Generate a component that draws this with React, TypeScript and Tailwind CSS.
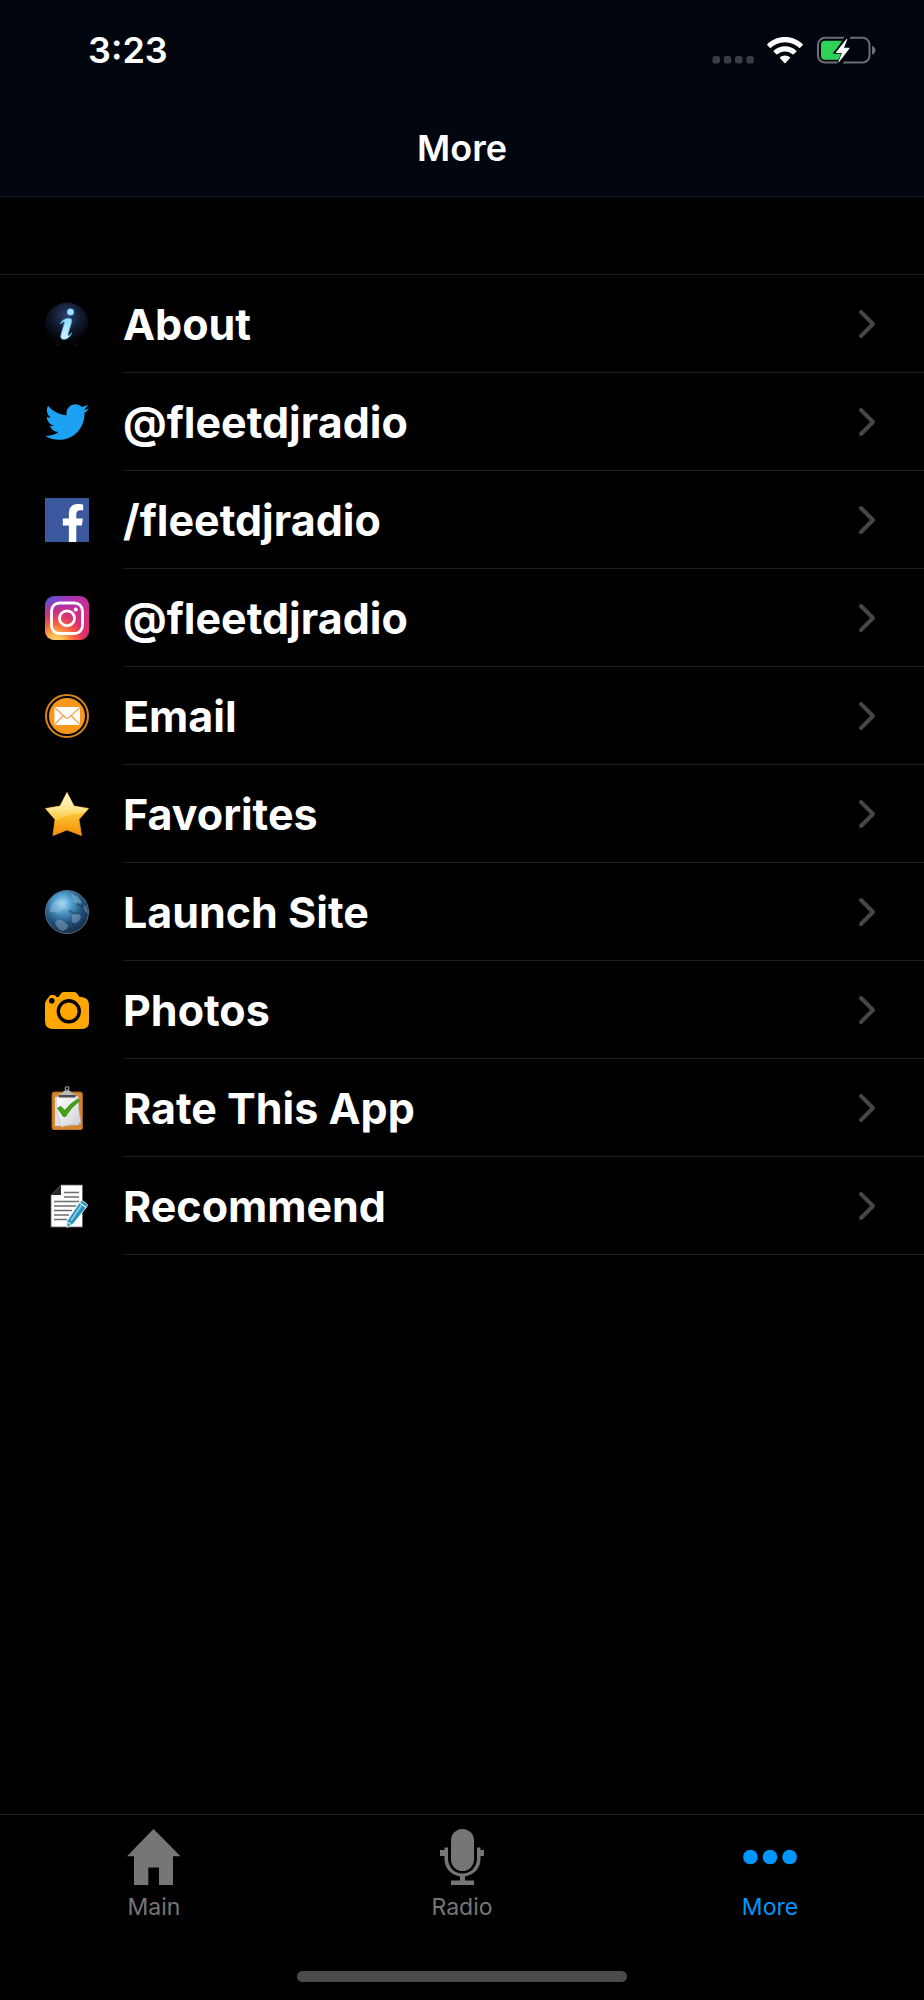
import type { ReactNode } from "react"
import { FaFacebookF, FaTwitter } from "react-icons/fa"

interface MenuItem {
  label: string
  href: string
  icon: ReactNode
}

function InfoIcon() {
  return (
    <svg viewBox="0 0 44 44" className="size-11" aria-hidden="true">
      <defs>
        <radialGradient id="info-bg" cx="0.5" cy="0.3" r="0.6">
          <stop offset="0" stopColor="#2c4069" />
          <stop offset="0.55" stopColor="#121b30" />
          <stop offset="1" stopColor="#030408" />
        </radialGradient>
        <linearGradient id="info-i" x1="0" y1="0" x2="0" y2="1">
          <stop offset="0" stopColor="#8fdcff" />
          <stop offset="1" stopColor="#d2f5ff" />
        </linearGradient>
      </defs>
      <circle cx="22" cy="22" r="21.5" fill="url(#info-bg)" />
      <path d="M11 42a21.5 21.5 0 0 0 22 0" fill="none" stroke="#1d1d1f" strokeWidth="0.8" />
      <circle cx="25.5" cy="10" r="3.6" fill="#9fe2ff" stroke="#2f6fae" strokeWidth="0.6" />
      <path
        d="M15 22c2-4 5.500-6 9-5.800 2.400.1 3.200 1.600 2.700 3.800l-3.700 12.500c-.3 1.400.6 1.400 1.600.5l2.200-2.400c-.9 3.600-4.300 6.900-8 6.800-2.800-.1-3.600-2-2.900-4.600l3.400-11.800c.3-1.300-.5-1.500-1.400-.7z"
        fill="url(#info-i)"
        stroke="#4a9ad0"
        strokeWidth="0.8"
      />
    </svg>
  )
}

function FacebookIcon() {
  return (
    <span className="flex size-11 items-end justify-end bg-[#3b579d] pr-1 text-white">
      <FaFacebookF className="h-[38px] w-6" aria-hidden="true" />
    </span>
  )
}

function InstagramIcon() {
  return (
    <svg viewBox="0 0 44 44" className="size-11" aria-hidden="true">
      <defs>
        <linearGradient id="ig-base" x1="0" y1="0" x2="1" y2="0.6">
          <stop offset="0" stopColor="#4a5bd8" />
          <stop offset="0.4" stopColor="#a433b8" />
          <stop offset="1" stopColor="#dd2a7b" />
        </linearGradient>
        <radialGradient id="ig-warm" cx="0.25" cy="1.05" r="0.95">
          <stop offset="0" stopColor="#fedc78" />
          <stop offset="0.2" stopColor="#fdb750" />
          <stop offset="0.45" stopColor="#f8603c" />
          <stop offset="0.7" stopColor="#e02f6a" stopOpacity="0.8" />
          <stop offset="1" stopColor="#d62976" stopOpacity="0" />
        </radialGradient>
      </defs>
      <rect width="44" height="44" rx="9" fill="url(#ig-base)" />
      <rect width="44" height="44" rx="9" fill="url(#ig-warm)" />
      <g fill="none" stroke="#fff" strokeWidth="2.800">
        <rect x="6.500" y="7" width="31" height="30.500" rx="8" />
        <circle cx="22" cy="22.300" r="7.500" />
      </g>
      <circle cx="30.800" cy="13.500" r="2" fill="#fff" />
    </svg>
  )
}

function EmailIcon() {
  return (
    <svg viewBox="0 0 44 44" className="size-11" aria-hidden="true">
      <circle cx="22" cy="22" r="21" fill="none" stroke="#d9841d" strokeWidth="2" />
      <circle cx="22" cy="22" r="18" fill="#f7981d" />
      <rect x="9.500" y="13" width="25.500" height="18" fill="#fff" />
      <path
        d="M9.500 13.500 20.500 23.500q1.700 1.500 3.500 0L35 13.500M9.500 30.500l9-9M35 30.500l-9-9"
        fill="none"
        stroke="#f2a44a"
        strokeWidth="1.200"
      />
    </svg>
  )
}

function StarIcon() {
  return (
    <svg viewBox="0 0 44 44" className="size-11" aria-hidden="true">
      <defs>
        <linearGradient id="star-bg" x1="0" y1="0" x2="0" y2="1">
          <stop offset="0" stopColor="#fdeaa0" />
          <stop offset="0.5" stopColor="#fbc531" />
          <stop offset="1" stopColor="#fb8c0b" />
        </linearGradient>
        <linearGradient id="star-gloss" x1="0" y1="0" x2="0" y2="1">
          <stop offset="0" stopColor="#fff3c0" />
          <stop offset="0.5" stopColor="#fff0b0" stopOpacity="0.8" />
          <stop offset="1" stopColor="#ffd75e" stopOpacity="0.4" />
        </linearGradient>
        <clipPath id="star-shape">
          <path d="M22 .5 29 14 43.500 16.500 34 27.500 36.500 43.500 22 38 8 43.500 10 27.500.5 16.500 15 14z" />
        </clipPath>
      </defs>
      <path
        d="M22 .5 29 14 43.500 16.500 34 27.500 36.500 43.500 22 38 8 43.500 10 27.500.5 16.500 15 14z"
        fill="url(#star-bg)"
        stroke="#e79a1c"
        strokeLinejoin="round"
        strokeWidth="0.8"
      />
      <path
        d="M0 0h44v20C30 21 20 24 10 29L0 20z"
        fill="url(#star-gloss)"
        clipPath="url(#star-shape)"
      />
    </svg>
  )
}

function GlobeIcon() {
  return (
    <svg viewBox="0 0 44 44" className="size-11" aria-hidden="true">
      <defs>
        <radialGradient id="globe-sea" cx="0.4" cy="0.3" r="0.72">
          <stop offset="0" stopColor="#a5dcf8" />
          <stop offset="0.3" stopColor="#4f9bcb" />
          <stop offset="0.65" stopColor="#235078" />
          <stop offset="1" stopColor="#162c48" />
        </radialGradient>
        <clipPath id="globe-clip">
          <circle cx="22" cy="22" r="21" />
        </clipPath>
      </defs>
      <circle cx="22" cy="22" r="21.500" fill="url(#globe-sea)" stroke="#53718c" />
      <g fill="#a9cbe0" fillOpacity="0.38" clipPath="url(#globe-clip)">
        <path d="M5 22c0-6 3-10 7-12q3-1 5 0l-1 4q4-1 5 1l1 3-5 1-3 4-5-1z" />
        <path d="M11 31q4-2 7 0l5 4-1 4-4 2q-5-1-8-8z" />
        <path d="M27 27q1-4 4-4l4 2 1 3-3 4q-4 2-6 0z" />
        <path d="m26 4 7 3 4 6-5 1-4-2 0-4z" />
        <path d="m38 14 4 4 1 6-3-3z" />
      </g>
      <path d="M32 13c2 3 5 4 7 2M24 21c4 1 5 4 9 2" fill="none" stroke="#15304e" strokeWidth="2" strokeOpacity="0.5" />
    </svg>
  )
}

function CameraIcon() {
  return (
    <svg viewBox="0 -2 44 44" className="size-11" aria-hidden="true">
      <path
        d="M3.500 7.500Q4.500 5 6 5h3q1.500 0 2.500 2h2L16 3.500Q16.800 2 18.500 2h11q1.700 0 2.500 1.500L34.500 7H37q7 1 7 8v17q0 7-7 7H8q-8 0-8-8V14q0-3 3.500-6.500z"
        fill="#ffa600"
      />
      <circle cx="6.800" cy="10.800" r="2.800" fill="#000" />
      <circle cx="23.800" cy="21.300" r="10.500" fill="none" stroke="#000" strokeWidth="3.400" />
    </svg>
  )
}

function ClipboardIcon() {
  return (
    <svg viewBox="0 0 44 44" className="size-11" aria-hidden="true">
      <defs>
        <linearGradient id="paper" x1="0" y1="0" x2="1" y2="1">
          <stop offset="0" stopColor="#fff" />
          <stop offset="1" stopColor="#cfcfd6" />
        </linearGradient>
      </defs>
      <rect x="7" y="6" width="30.500" height="38" rx="2.500" fill="#d18432" stroke="#a96420" strokeWidth="0.8" />
      <path d="m10 11 23-1 1 29-24 1z" fill="#e1e1e5" />
      <path d="m11 11 22-1q0 14 3 27-10 1-20 4-5-15-5-30z" fill="url(#paper)" stroke="#b5b5bd" strokeWidth="0.5" />
      <circle cx="22" cy="2.500" r="1.800" fill="none" stroke="#8c8c8c" strokeWidth="1.300" />
      <path d="M14 11V8q4-.5 5-3.500h6Q26 7.500 30 8v3z" fill="#b9b9b9" />
      <path d="M14 9h16.500v2.500H14z" fill="#4b4b4b" />
      <path d="m12.500 22 3.500-1.500 4 4Q25 17.500 33 13l1.500 2Q26 21 20.500 30.500q-1.500.5-2.500-.5z" fill="#41a313" stroke="#2f800b" strokeWidth="0.8" />
    </svg>
  )
}

function NoteIcon() {
  return (
    <svg viewBox="0 0 44 44" className="size-11" aria-hidden="true">
      <path d="M6 11 16 1h21.500v42H6z" fill="#fff" stroke="#666" strokeWidth="0.8" />
      <path d="M6 11 16 1v10z" fill="#2b2b2b" />
      <path d="M19 8.500h15M19 13h15M9 17.500h25M9 22h22M9 26.500h18M9 31h15M9 35.500h13" stroke="#6a6f70" strokeWidth="1.600" />
      <path d="m22 37 13-19q1-2 3-1l3.500 2.500q1.500 1 .5 3L28 40l-6 3.500z" fill="#2b93bd" stroke="#e9f6fb" strokeWidth="0.8" />
      <path d="m26 36.500 10.500-15.500" stroke="#8fd0e8" strokeWidth="1.600" />
      <path d="m34.500 18.500 6.500 5" stroke="#d5edf6" strokeWidth="1.200" />
      <path d="m22.500 38 3.500 2.500" stroke="#d5edf6" strokeWidth="1.200" />
    </svg>
  )
}

const menuItems: MenuItem[] = [
  { label: "About", href: "#about", icon: <InfoIcon /> },
  { label: "@fleetdjradio", href: "#twitter", icon: <FaTwitter className="size-11 text-[#1da1f2]" aria-hidden="true" /> },
  { label: "/fleetdjradio", href: "#facebook", icon: <FacebookIcon /> },
  { label: "@fleetdjradio", href: "#instagram", icon: <InstagramIcon /> },
  { label: "Email", href: "#email", icon: <EmailIcon /> },
  { label: "Favorites", href: "#favorites", icon: <StarIcon /> },
  { label: "Launch Site", href: "#site", icon: <GlobeIcon /> },
  { label: "Photos", href: "#photos", icon: <CameraIcon /> },
  { label: "Rate This App", href: "#rate", icon: <ClipboardIcon /> },
  { label: "Recommend", href: "#recommend", icon: <NoteIcon /> },
]

function StatusBar() {
  return (
    <div className="flex h-[100px] items-center justify-between pr-12 pl-[88px]">
      <span className="text-[36px] leading-10 font-semibold">3:23</span>
      <div className="flex h-7 items-end gap-[13px]">
        <svg viewBox="0 0 42 8" className="h-2 w-[42px] fill-[#3a3c43]" aria-hidden="true">
          <rect x="0.500" width="7.500" height="7.500" rx="2.500" />
          <rect x="11.800" width="7.500" height="7.500" rx="2.500" />
          <rect x="23" width="7.500" height="7.500" rx="2.500" />
          <rect x="34.300" width="7.500" height="7.500" rx="2.500" />
        </svg>
        <svg viewBox="0 0 36 28" className="h-7 w-9 fill-white" aria-hidden="true">
          <path d="M18 1C11 1 4.700 3.700.3 8.200q-.4.500 0 1l2.600 2.600q.5.500 1 0C7.500 8.300 12.500 6.200 18 6.200s10.500 2.100 14.100 5.600q.5.500 1 0l2.600-2.600q.4-.5 0-1C31.300 3.700 25 1 18 1z" />
          <path d="M18 10.200c-4.400 0-8.400 1.700-11.300 4.500q-.5.500 0 1l2.700 2.600q.5.500 1 0c2-1.800 4.700-2.900 7.600-2.900s5.600 1.100 7.600 2.900q.5.500 1 0l2.700-2.600q.5-.5 0-1C26.400 11.900 22.400 10.200 18 10.200z" />
          <path d="M18 19.400c-1.900 0-3.600.7-4.900 1.800q-.5.500 0 1l4.400 4.700q.5.500 1 0l4.400-4.700q.5-.5 0-1c-1.300-1.100-3-1.800-4.900-1.800z" />
        </svg>
        <svg viewBox="0 0 60 28" className="h-7 w-[60px]" aria-hidden="true">
          <rect x="2" y="1.800" width="51.500" height="24.800" rx="7" fill="none" stroke="#6c6e73" strokeWidth="2" />
          <path d="M56 9.800q3.500 1.500 3.500 4.500T56 18.800z" fill="#6c6e73" />
          <path d="M9 4.800h18.500L16.500 17.500h9l-2.300 6.300H9q-4 0-4-4v-11q0-4 4-4z" fill="#30d158" />
          <path d="M29 0h5.500L32 10h5.500L26.500 28H21l4-10.500h-7z" fill="#01050e" />
          <path d="M30.500 3 20 16.200q-.4.800.5.800h5.300L22.500 25.500q-.2 1.200.7.500L33.500 12.600q.4-.9-.5-.9h-5l3.200-8.200q.1-1.200-.7-.5z" fill="#fff" />
        </svg>
      </div>
    </div>
  )
}

function HomeTabIcon() {
  return (
    <svg viewBox="0 0 54 56" className="h-14 w-[54px] fill-current" aria-hidden="true">
      <path d="M26.500 0 53.500 27.300H46V56H32V38.500H21.300V56H7V27.300H0z" />
    </svg>
  )
}

function MicTabIcon() {
  return (
    <svg viewBox="0 0 44 56" className="h-14 w-11 fill-current" aria-hidden="true">
      <rect x="11" width="23" height="42" rx="11.500" />
      <path d="M0 21h4.500v-2.500H8V29c0 9 6 15.500 14.500 15.500S37 38 37 29V18.500h3.500V21H44v6h-3.500v3c0 9-6 15.500-15.500 17.500v4h9V56H11v-4.500h9v-4C10.500 45.500 4.500 39 4.500 30v-3H0z" />
    </svg>
  )
}

function MoreTabIcon() {
  return (
    <svg viewBox="0 0 54 56" className="h-14 w-[54px] fill-current" aria-hidden="true">
      <circle cx="7.400" cy="28" r="7.300" />
      <circle cx="27" cy="28" r="7.300" />
      <circle cx="46.600" cy="28" r="7.300" />
    </svg>
  )
}

function TabBar() {
  return (
    <nav className="border-t border-[#1c1c1c] pb-[18px]">
      <div className="grid grid-cols-3">
        <a href="#main" className="flex flex-col items-center gap-2 pt-3.5 text-[#767676]">
          <HomeTabIcon />
          <span className="text-[23px] leading-7">Main</span>
        </a>
        <a href="#radio" className="flex flex-col items-center gap-2 pt-3.5 text-[#767676]">
          <MicTabIcon />
          <span className="text-[23px] leading-7">Radio</span>
        </a>
        <a href="#more" aria-current="page" className="flex flex-col items-center gap-2 pt-3.5 text-[#0096ff]">
          <MoreTabIcon />
          <span className="text-[23px] leading-7">More</span>
        </a>
      </div>
      <div className="mx-auto mt-[50px] h-[11px] w-[330px] rounded-full bg-[#4a4a4a]" />
    </nav>
  )
}

export default function App() {
  return (
    <div className="flex min-h-screen flex-col bg-black font-['Inter',sans-serif] text-white">
      <header className="border-b border-[#14171f] bg-[#01050e]">
        <StatusBar />
        <h1 className="flex h-24 items-center justify-center text-[36px] leading-10 font-semibold">More</h1>
      </header>

      <main className="flex-1 pt-[77px]">
        <ul className="grid auto-rows-[98px] border-t border-[#1c1c1c]">
          {menuItems.map((item) => (
            <li key={item.href}>
              <a href={item.href} className="flex h-full items-center gap-[34px] pl-[45px]">
                {item.icon}
                <span className="flex h-full flex-1 items-center justify-between border-b border-[#1e1e1e] pr-12">
                  <span className="text-[43px] leading-[52px] font-bold">{item.label}</span>
                  <svg viewBox="0 0 18 30" className="h-[30px] w-[18px]" aria-hidden="true">
                    <path
                      d="M3 3 15 15 3 27"
                      fill="none"
                      stroke="#464649"
                      strokeWidth="4"
                      strokeLinecap="round"
                      strokeLinejoin="round"
                    />
                  </svg>
                </span>
              </a>
            </li>
          ))}
        </ul>
      </main>

      <TabBar />
    </div>
  )
}
